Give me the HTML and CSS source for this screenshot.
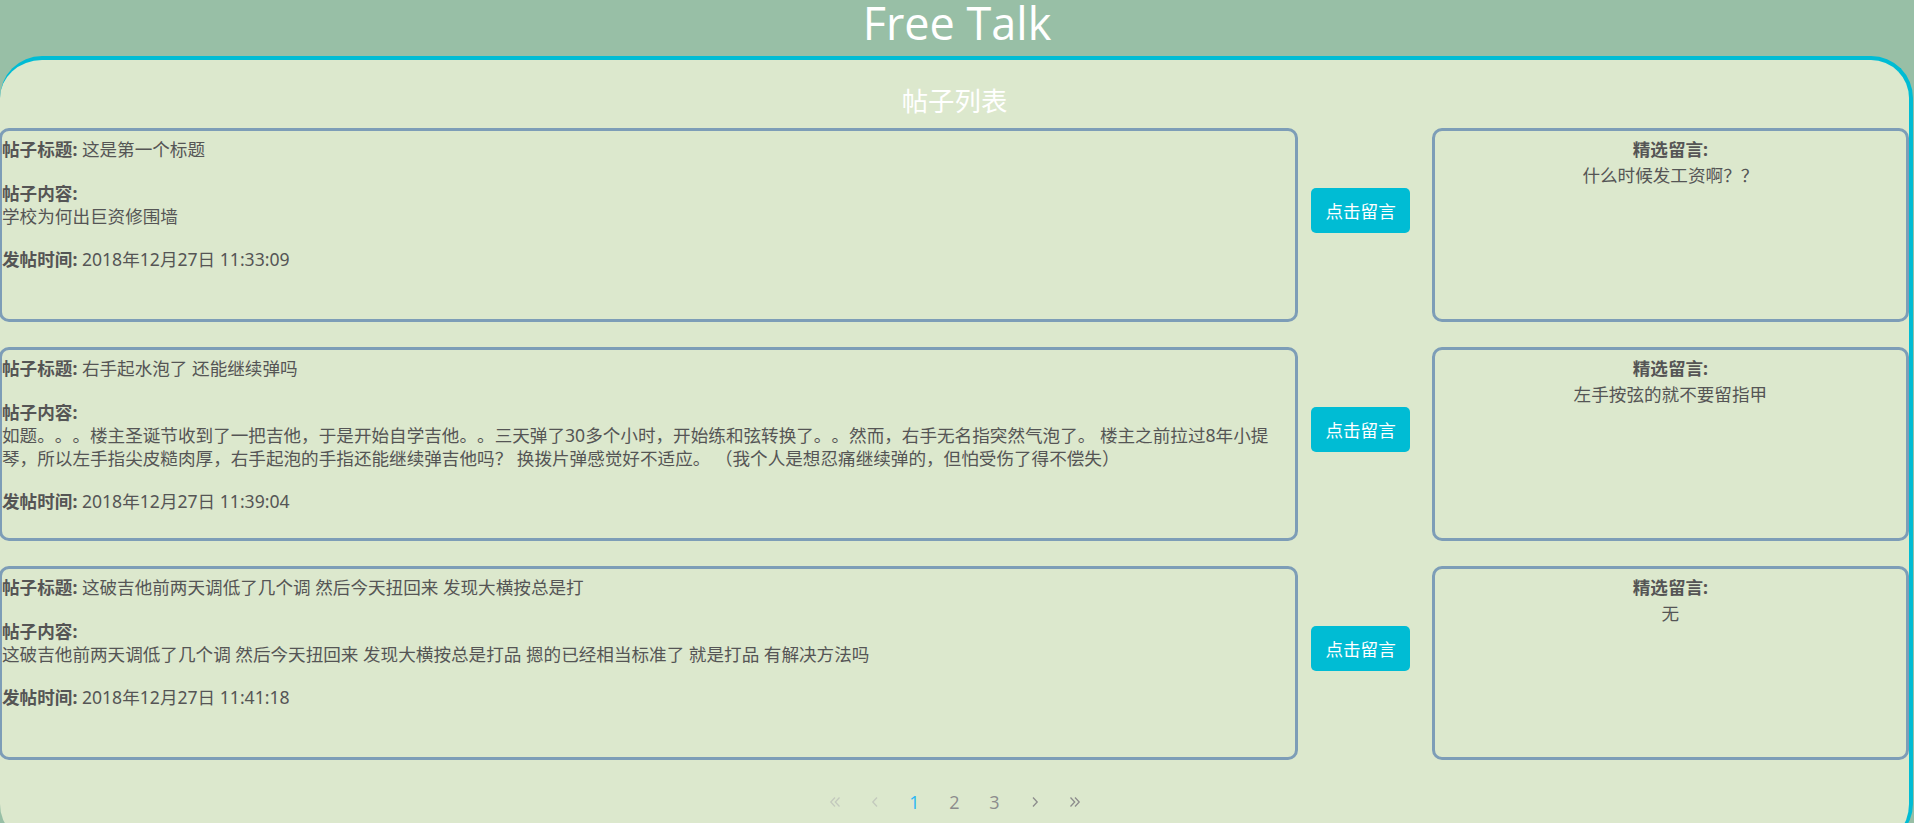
FILE: index.html
```html
<!DOCTYPE html>
<html lang="zh-CN">
<head>
<meta charset="utf-8">
<title>Free Talk</title>
<link rel="stylesheet" href="styles.css">
</head>
<body>
<header class="site-header">
  <h1 class="site-title">Free Talk</h1>
</header>
<main class="board">
  <h2 class="board-title">帖子列表</h2>
  <div class="post-list">
    <div class="post-row">
      <div class="post-card">
        <p class="post-line"><b>帖子标题:</b> 这是第一个标题</p>
        <div class="post-body"><b>帖子内容:</b><br>学校为何出巨资修围墙</div>
        <p class="post-line"><b>发帖时间:</b> 2018年12月27日 11:33:09</p>
      </div>
      <div class="action-col"><button class="reply-btn">点击留言</button></div>
      <div class="comment-card">
        <b>精选留言:</b><br>什么时候发工资啊？？
      </div>
    </div>
    <div class="post-row">
      <div class="post-card">
        <p class="post-line"><b>帖子标题:</b> 右手起水泡了 还能继续弹吗</p>
        <div class="post-body"><b>帖子内容:</b><br>如题。。。楼主圣诞节收到了一把吉他，于是开始自学吉他。。三天弹了30多个小时，开始练和弦转换了。。然而，右手无名指突然气泡了。 楼主之前拉过8年小提琴，所以左手指尖皮糙肉厚，右手起泡的手指还能继续弹吉他吗？ 换拨片弹感觉好不适应。 （我个人是想忍痛继续弹的，但怕受伤了得不偿失）</div>
        <p class="post-line"><b>发帖时间:</b> 2018年12月27日 11:39:04</p>
      </div>
      <div class="action-col"><button class="reply-btn">点击留言</button></div>
      <div class="comment-card">
        <b>精选留言:</b><br>左手按弦的就不要留指甲
      </div>
    </div>
    <div class="post-row">
      <div class="post-card">
        <p class="post-line"><b>帖子标题:</b> 这破吉他前两天调低了几个调 然后今天扭回来 发现大横按总是打</p>
        <div class="post-body"><b>帖子内容:</b><br>这破吉他前两天调低了几个调 然后今天扭回来 发现大横按总是打品 摁的已经相当标准了 就是打品 有解决方法吗</div>
        <p class="post-line"><b>发帖时间:</b> 2018年12月27日 11:41:18</p>
      </div>
      <div class="action-col"><button class="reply-btn">点击留言</button></div>
      <div class="comment-card">
        <b>精选留言:</b><br>无
      </div>
    </div>
  </div>
  <nav class="pager">
    <span class="pager-item disabled"><svg class="chev" width="12" height="12" viewBox="0 0 12 12"><path d="M6 1.5L1.8 6L6 10.5M10.5 1.5L6.3 6L10.5 10.5" fill="none" stroke="currentColor" stroke-width="1.3"/></svg></span>
    <span class="pager-item disabled"><svg class="chev" width="12" height="12" viewBox="0 0 12 12"><path d="M8 1.5L3.8 6L8 10.5" fill="none" stroke="currentColor" stroke-width="1.3"/></svg></span>
    <span class="pager-item active">1</span>
    <span class="pager-item">2</span>
    <span class="pager-item">3</span>
    <span class="pager-item"><svg class="chev" width="12" height="12" viewBox="0 0 12 12"><path d="M4 1.5L8.2 6L4 10.5" fill="none" stroke="currentColor" stroke-width="1.3"/></svg></span>
    <span class="pager-item"><svg class="chev" width="12" height="12" viewBox="0 0 12 12"><path d="M1.5 1.5L5.7 6L1.5 10.5M6 1.5L10.2 6L6 10.5" fill="none" stroke="currentColor" stroke-width="1.3"/></svg></span>
  </nav>
</main>
</body>
</html>
```
FILE: styles.css
```css
html, body {
  margin: 0;
  padding: 0;
  overflow: hidden;
}
body {
  background: #98bfa6;
  font-family: "Noto Sans", "Noto Sans CJK SC", sans-serif;
  color: #555;
  text-spacing-trim: space-all;
}
.site-header {
  height: 56px;
}
.site-title {
  margin: 0;
  text-align: center;
  font-family: "Open Sans", "Noto Sans", sans-serif;
  font-weight: 400;
  font-size: 45px;
  line-height: 46px;
  color: #fff;
}
.board {
  margin-right: 1px;
  min-height: 790px;
  background: #dce8cd;
  border-top: 4px solid #00bcd4;
  border-right: 4px solid #00bcd4;
  border-left: 0 solid #00bcd4;
  border-bottom: 0 solid #00bcd4;
  border-radius: 42px;
  padding-top: 25px;
  box-sizing: border-box;
}
.board-title {
  margin: 0 0 13px;
  text-align: center;
  font-family: "Noto Sans CJK SC", sans-serif;
  font-weight: 400;
  font-size: 26.4px;
  line-height: 30px;
  color: #fff;
}
.post-list {
  display: flex;
  flex-direction: column;
  gap: 25px;
}
.post-row {
  display: grid;
  grid-template-columns: 68% 1fr 25%;
  height: 194px;
}
.post-card, .comment-card {
  border: 3px solid #7d9db7;
  border-radius: 10px;
  box-sizing: border-box;
  height: 194px;
  font-size: 17.6px;
}
.post-card {
  margin-left: -1px;
  padding: 7px 14px 0 0;
}
.post-line {
  margin: 0;
  line-height: 23px;
}
.post-line + .post-body {
  margin-top: 21px;
}
.post-body {
  line-height: 23px;
  margin-bottom: 20px;
}
.action-col {
  padding-top: 60px;
  padding-left: 13px;
}
.reply-btn {
  width: 99px;
  height: 45px;
  border: 0;
  border-radius: 5px;
  background: #00bcd4;
  color: #fff;
  font-family: "Noto Sans CJK SC", sans-serif;
  font-size: 17.6px;
  padding: 0;
}
.comment-card {
  text-align: center;
  padding-top: 5px;
  line-height: 26px;
}
.pager {
  display: flex;
  justify-content: center;
  align-items: center;
  margin-top: 32px;
  font-family: "Open Sans", "Noto Sans", sans-serif;
  font-size: 18px;
  line-height: 20px;
}
.pager-item {
  width: 40px;
  height: 20px;
  display: flex;
  align-items: center;
  justify-content: center;
  color: #8c8c8c;
}
.pager-item.disabled {
  color: #c3c9bd;
}
.pager-item.active {
  color: #29b6f6;
}
.chev {
  display: block;
}
```
